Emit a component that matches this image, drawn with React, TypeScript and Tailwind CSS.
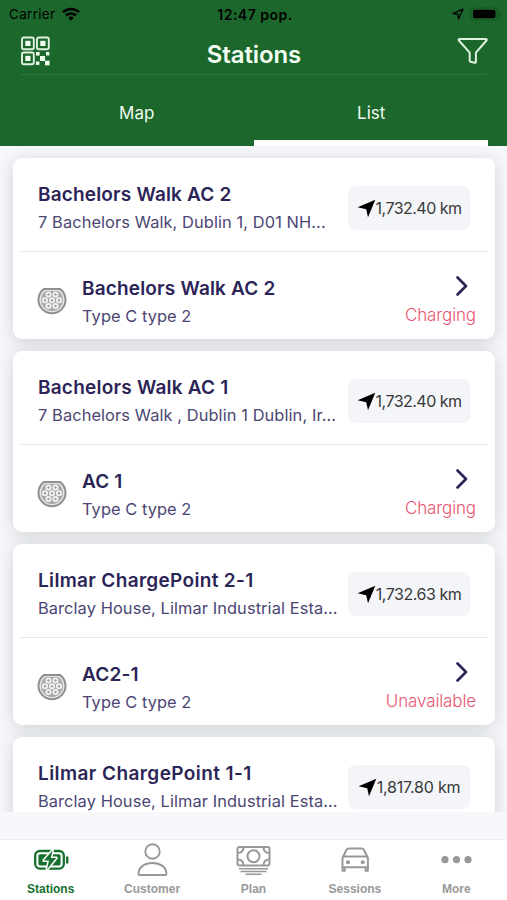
import React from 'react';

type Station = {
  name: string;
  nameTracking: string;
  address: string;
  distance: string;
  distanceTracking: string;
  connector?: string;
  status?: string;
};

const stations: Station[] = [
  { name: 'Bachelors Walk AC 2', nameTracking: 'tracking-[0.17px]', address: '7 Bachelors Walk, Dublin 1, D01 NH...', distance: '1,732.40 km', distanceTracking: 'tracking-[-0.53px]', connector: 'Bachelors Walk AC 2', status: 'Charging' },
  { name: 'Bachelors Walk AC 1', nameTracking: 'tracking-[0.22px]', address: '7 Bachelors Walk , Dublin 1 Dublin, Ir...', distance: '1,732.40 km', distanceTracking: 'tracking-[-0.53px]', connector: 'AC 1', status: 'Charging' },
  { name: 'Lilmar ChargePoint 2-1', nameTracking: 'tracking-[0.33px]', address: 'Barclay House, Lilmar Industrial Esta...', distance: '1,732.63 km', distanceTracking: 'tracking-[-0.45px]', connector: 'AC2-1', status: 'Unavailable' },
  { name: 'Lilmar ChargePoint 1-1', nameTracking: 'tracking-[0.42px]', address: 'Barclay House, Lilmar Industrial Esta...', distance: '1,817.80 km', distanceTracking: 'tracking-[-0.2px]' },
];

function WifiIcon() {
  return (
    <svg className="ml-[7px] h-[14px] w-[18px]" viewBox="0 0 18 14" fill="none" stroke="#000" strokeWidth="2.5">
      <path d="M1 5.2a11.6 11.6 0 0 1 16 0" />
      <path d="M4 8.5a7.3 7.3 0 0 1 10 0" />
      <path d="M6.2 10.9a4 4 0 0 1 5.6 0L9 13.8z" fill="#000" stroke="none" />
    </svg>
  );
}

function QrIcon() {
  return (
    <svg className="h-[30px] w-[30px]" viewBox="0 0 30 30" fill="none" stroke="#e0f2e0" strokeWidth="1.9">
      <rect x="2" y="1.5" width="11.8" height="11.8" rx="1.8" />
      <rect x="17" y="1.5" width="11.8" height="11.8" rx="1.8" />
      <rect x="2" y="16.5" width="11.8" height="11.8" rx="1.8" />
      <g fill="#f0fff0" stroke="none">
        <rect x="5.3" y="4.8" width="5.2" height="5.2" />
        <rect x="20.3" y="4.8" width="5.2" height="5.2" />
        <rect x="5.3" y="19.8" width="5.2" height="5.2" />
        <rect x="16" y="16" width="3.6" height="3.6" />
        <rect x="26" y="16" width="3.4" height="3.4" />
        <rect x="20" y="20" width="5" height="5" />
        <rect x="16" y="25.5" width="3.4" height="3.4" />
        <rect x="25" y="24.7" width="4.6" height="4.6" />
      </g>
    </svg>
  );
}

function FilterIcon() {
  return (
    <svg className="h-[28px] w-[32px]" viewBox="0 0 32 28" fill="none" stroke="#e0f2e0" strokeWidth="2" strokeLinejoin="round">
      <path d="M3.500 2h26.400c.8 0 1.100.8.6 1.500L19.900 15.700v9.100c0 .8-.5 1-1.200.9l-4.200-1c-.5-.1-.8-.5-.8-1v-8L2.900 3.500C2.400 2.800 2.700 2 3.500 2z" />
    </svg>
  );
}

function ConnectorIcon() {
  const pins = [[-3.5, -6.5], [3.5, -6.5], [-7, -0.8], [0, -0.8], [7, -0.8], [-3.5, 5], [3.5, 5]];
  return (
    <svg className="h-[30px] w-[30px]" viewBox="-15 -15 30 30">
      <path d="M-8.200-12.600H8.200A13.500 13.500 0 1 1-8.200-12.600z" transform="translate(0 .7)" fill="#e4e4e4" stroke="#909090" strokeWidth="2" strokeLinejoin="round" />
      <path d="M-6.200-10.200H6.200A10.900 10.900 0 1 1-6.200-10.200z" transform="translate(0 .3)" fill="#a8a8a8" />
      {pins.map(([x, y], i) => (
        <g key={i}>
          <circle cx={x} cy={y} r="3" fill="#f4f4f4" />
          <circle cx={x} cy={y} r="1.2" fill="#a0a0a0" />
        </g>
      ))}
    </svg>
  );
}

function StationCard({ s }: { s: Station }) {
  return (
    <article className="h-[181px] shrink-0 rounded-[9px] bg-white px-[7px] shadow-[0_3px_18px_rgba(50,58,62,0.20)]">
      <div className="flex h-[94px] justify-between border-b-[1.5px] border-[#e9e9ec] pr-[18px] pl-[18px]">
        <div className="pt-[23px] whitespace-nowrap">
          <h2 className={`text-[19px] leading-[28px] font-semibold text-[#2b2457] ${s.nameTracking}`}>{s.name}</h2>
          <p className="text-[16.4px] leading-[27px] tracking-[0.09px] text-[#4b4672]">{s.address}</p>
        </div>
        <div className="mt-[28px] flex h-[44px] w-[122px] shrink-0 items-center justify-center rounded-[7px] bg-[#f4f5f8]">
          <svg className="h-[19px] w-[19px] shrink-0" viewBox="0 0 19 19" fill="#000">
            <path d="M18.300.8 11 18.200 9.200 10.200.6 8.300z" />
          </svg>
          <span className={`text-[16px] whitespace-nowrap text-[#383838] ${s.distanceTracking}`}>{s.distance}</span>
        </div>
      </div>
      {s.connector && (
        <div className="flex pt-[23px] pr-[12px] pl-[17px]">
          <div className="pt-[11px]"><ConnectorIcon /></div>
          <div className="ml-[15px] flex-1 whitespace-nowrap">
            <h3 className="text-[19px] leading-[28px] font-semibold tracking-[0.17px] text-[#2b2457]">{s.connector}</h3>
            <p className="text-[16.4px] leading-[27px] tracking-[0.06px] text-[#4b4672]">Type C type 2</p>
          </div>
          <div className="flex flex-col items-end">
            <svg className="mr-[7px] h-[22px] w-[14px]" viewBox="0 0 14 22" fill="none" stroke="#2b2457" strokeWidth="2.7" strokeLinecap="round" strokeLinejoin="round">
              <path d="M2.500 2.500 11 11 2.500 19.500" />
            </svg>
            <span className="mt-[5px] text-[17px] leading-[26px] font-light tracking-[-0.12px] text-[#ea5570]">{s.status}</span>
          </div>
        </div>
      )}
    </article>
  );
}

function BatteryIcon() {
  return (
    <svg className="h-[34px] w-[38px]" viewBox="0 0 38 34" fill="none" stroke="#18702e">
      <rect x="3.2" y="8" width="28.6" height="17.6" rx="4.5" strokeWidth="2.3" />
      <rect x="6.4" y="11.2" width="22.2" height="11.2" rx="1.6" fill="#18702e" stroke="none" />
      <path d="M35.200 13.500v7" strokeWidth="2.4" />
      <path d="M20.500 7.500 11.800 17.600h5.200l-2 8.600 9.200-11.200h-5.400z" fill="#18702e" stroke="#fff" strokeWidth="3" strokeLinejoin="round" />
      <path d="M20.500 7.500 11.800 17.600h5.200l-2 8.600 9.200-11.200h-5.400z" fill="#18702e" stroke="none" />
    </svg>
  );
}

function PersonIcon() {
  return (
    <svg className="h-[34px] w-[32px]" viewBox="0 0 32 34" fill="none" stroke="#989898" strokeWidth="1.9" strokeLinejoin="round">
      <circle cx="16.5" cy="8.5" r="7.2" />
      <path d="M2.500 31c0-7 6.200-11 14-11s14 4 14 11c0 .6-.4 1-1 1h-26c-.6 0-1-.4-1-1z" />
    </svg>
  );
}

function CashIcon() {
  return (
    <svg className="h-[34px] w-[38px]" viewBox="0 0 38 34" fill="none" stroke="#989898" strokeWidth="2">
      <rect x="3.5" y="4" width="32" height="18.5" rx="2" />
      <circle cx="19.5" cy="13.2" r="6" />
      <path d="M3.500 10c4 0 6-2 6-6M29.500 4c0 4 2 6 6 6M3.500 16.500c4 0 6 2 6 6M29.500 22.500c0-4 2-6 6-6" />
      <path d="M5 25.800h29M6.500 28.400h26M11.500 31.200h16" strokeWidth="1.5" />
    </svg>
  );
}

function CarIcon() {
  return (
    <svg className="h-[34px] w-[30px]" viewBox="0 0 30 34" fill="none" stroke="#989898" strokeWidth="2" strokeLinejoin="round">
      <path d="M2.500 15 6.400 7c.5-.9 1.200-1.400 2.200-1.400h13.200c1 0 1.700.5 2.200 1.400l3.900 8v9.300H2.500z" />
      <path d="M3.500 13.500h23.500" />
      <path d="M2.500 24v3.700h2.300V24M25.600 24v3.700h2.300V24" />
      <circle cx="8" cy="19.3" r="2" fill="#989898" stroke="none" />
      <circle cx="22.7" cy="19.3" r="2" fill="#989898" stroke="none" />
    </svg>
  );
}

function MoreIcon() {
  return (
    <svg className="h-[34px] w-[32px]" viewBox="0 0 32 34" fill="#989898">
      <circle cx="5" cy="16.7" r="3.6" />
      <circle cx="16.5" cy="16.7" r="3.6" />
      <circle cx="28" cy="16.7" r="3.6" />
    </svg>
  );
}

const tabs = [
  { label: 'Stations', icon: <BatteryIcon />, active: true },
  { label: 'Customer', icon: <PersonIcon /> },
  { label: 'Plan', icon: <CashIcon /> },
  { label: 'Sessions', icon: <CarIcon /> },
  { label: 'More', icon: <MoreIcon /> },
];

export default function App() {
  return (
    <div className="flex h-[900px] w-[507px] flex-col overflow-hidden bg-[#f7f8fc] font-[Inter,sans-serif]">
      <header className="flex h-[146px] shrink-0 flex-col bg-[#1c672c]">
        <div className="grid h-[28px] grid-cols-3 items-center pr-[6px] pl-[9px] text-black">
          <div className="flex items-center"><span className="text-[13.5px] tracking-[0.3px]">Carrier</span><WifiIcon /></div>
          <div className="text-center text-[14px] font-semibold tracking-[0.5px]">12:47 pop.</div>
          <div className="flex items-center justify-end gap-[6px]">
            <svg className="h-[12px] w-[12px]" viewBox="0 0 12 12" fill="none" stroke="#000" strokeWidth="1.3" strokeLinejoin="round">
              <path d="M11 1 1 5.700 6 6.200 6.500 11z" />
            </svg>
            <svg className="h-[15px] w-[31px]" viewBox="0 0 31 15">
              <rect x="1" y="1" width="26.5" height="12" rx="4" fill="none" stroke="#15561f" strokeWidth="1.2" />
              <rect x="3" y="2.8" width="22.5" height="8.5" rx="2" fill="#000" />
              <path d="M29 5v5c2-.8 2-4.200 0-5z" fill="#15501f" />
            </svg>
          </div>
        </div>
        <div className="mx-[20px] flex h-[47px] items-start justify-between border-b border-[#2e763d] pt-[8px]">
          <QrIcon />
          <h1 className="mt-[3px] ml-[2px] text-[24px] leading-[32px] font-semibold tracking-[-0.1px] text-[#f4fff4]">Stations</h1>
          <div className="-mr-[1px] pt-[1px]"><FilterIcon /></div>
        </div>
        <nav className="mx-[19px] grid flex-1 grid-cols-2 text-[17px] text-[#f0fbf0]">
          <div className="flex h-[71px] items-center justify-center pt-[6px] pl-[1px]">Map</div>
          <div className="flex h-[71px] items-center justify-center border-b-[6px] border-white pt-[12px] pl-[1px]">List</div>
        </nav>
      </header>

      <main className="flex h-[666px] shrink-0 flex-col gap-[12px] overflow-hidden pt-[12px] pr-[12px] pl-[13px]">
        {stations.map((s) => <StationCard key={s.name} s={s} />)}
      </main>

      <footer className="mt-[27px] grid h-[61px] shrink-0 grid-cols-5 border-t border-[#eeeeef] bg-white">
        {tabs.map((t) => (
          <div key={t.label} className={`flex flex-col items-center pt-[3px] font-['Liberation_Sans',Arial,sans-serif] text-[12px] font-bold ${t.active ? 'text-[#18702e]' : 'text-[#989898]'}`}>
            {t.icon}
            <span className="mt-[4px] leading-[16px]">{t.label}</span>
          </div>
        ))}
      </footer>
    </div>
  );
}
